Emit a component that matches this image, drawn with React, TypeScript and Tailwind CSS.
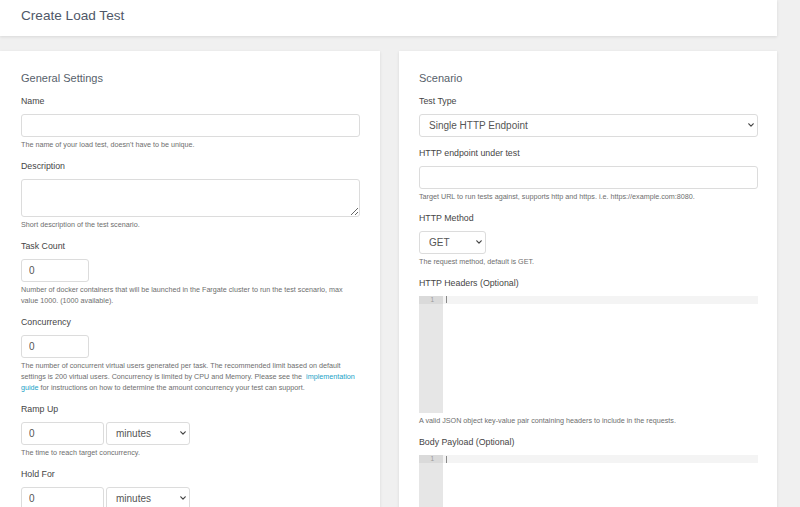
import React from "react";

function Chevron() {
  return (
    <svg
      width="6"
      height="4"
      viewBox="0 0 6 4"
      className="pointer-events-none absolute right-[4px] top-1/2 -translate-y-1/2"
    >
      <path
        d="M0.8 0.8 L3 3.1 L5.2 0.8"
        fill="none"
        stroke="#444"
        strokeWidth="1.2"
        strokeLinecap="round"
        strokeLinejoin="round"
      />
    </svg>
  );
}

function Label({ children }: { children: React.ReactNode }) {
  return <div className="text-[8.8px] leading-[12.5px] text-[#454545] mb-[6px]">{children}</div>;
}

function Help({ children }: { children: React.ReactNode }) {
  return <div className="text-[7.2px] leading-[11px] text-[#6e6e6e] mt-[2.5px] whitespace-nowrap">{children}</div>;
}

function TextInput({ value, w }: { value?: string; w: string }) {
  return (
    <input
      readOnly
      value={value ?? ""}
      className={`block ${w} h-[23px] border border-[#dcdcdc] rounded-[3px] bg-white text-[10px] text-[#555] pl-[7px] outline-none font-['Liberation_Sans',Arial,sans-serif]`}
    />
  );
}

function Select({ value, w }: { value: string; w: string }) {
  return (
    <div className={`relative ${w} h-[23px]`}>
      <select
        defaultValue={value}
        className="block w-full h-full appearance-none border border-[#dcdcdc] rounded-[3px] bg-white text-[10px] text-[#555] pl-[9px] outline-none font-['Liberation_Sans',Arial,sans-serif]"
      >
        <option>{value}</option>
      </select>
      <Chevron />
    </div>
  );
}

function Editor() {
  return (
    <div className="flex w-[339px] h-[117.4px] bg-white">
      <div className="w-[24px] h-full bg-[#e6e6e6]">
        <div className="h-[8.4px] bg-[#dadada] text-right pr-[9px] text-[6.5px] leading-[8.4px] text-[#9a9a9a]">1</div>
      </div>
      <div className="flex-1 h-full">
        <div className="h-[8.4px] bg-[#f4f4f4] flex items-center">
          <div className="w-px h-[7px] bg-[#888] ml-[3px]" />
        </div>
      </div>
    </div>
  );
}

export default function App() {
  return (
    <div className="w-[800px] h-[507px] overflow-hidden bg-[#f0f0f0] font-['Liberation_Sans',Arial,sans-serif]">
      <div className="w-[777px] h-[36px] bg-white shadow-[0_1px_3px_rgba(0,0,0,0.1)] pl-[21px] pt-[8px]">
        <div className="text-[13.6px] leading-[16px] text-[#4f5868]">Create Load Test</div>
      </div>

      <div className="mt-[15px] grid grid-cols-[380px_378px] gap-x-[19px]">
        {/* Left card */}
        <div className="h-[480px] bg-white shadow-[0_1px_3px_rgba(0,0,0,0.1)] pl-[21px] pr-[20px] pt-[20px]">
          <div className="text-[11px] leading-[14px] text-[#575f6b] mb-[10px]">General Settings</div>

          <div className="mb-[10px]">
            <Label>Name</Label>
            <TextInput w="w-[339px]" />
            <Help>The name of your load test, doesn't have to be unique.</Help>
          </div>

          <div className="mb-[10px]">
            <Label>Description</Label>
            <textarea
              readOnly
              className="block w-[339px] h-[38px] border border-[#dcdcdc] rounded-[3px] bg-white outline-none"
            />
            <Help>Short description of the test scenario.</Help>
          </div>

          <div className="mb-[10px]">
            <Label>Task Count</Label>
            <TextInput w="w-[68px]" value="0" />
            <Help>
              <div>Number of docker containers that will be launched in the Fargate cluster to run the test scenario, max</div>
              <div>value 1000. (1000 available).</div>
            </Help>
          </div>

          <div className="mb-[10px]">
            <Label>Concurrency</Label>
            <TextInput w="w-[68px]" value="0" />
            <Help>
              <div>The number of concurrent virtual users generated per task. The recommended limit based on default</div>
              <div>
                settings is 200 virtual users. Concurrency is limited by CPU and Memory. Please see the&nbsp;{" "}
                <span className="text-[#1b9fc7]">implementation</span>
              </div>
              <div>
                <span className="text-[#1b9fc7]">guide</span> for instructions on how to determine the amount concurrency your test can support.
              </div>
            </Help>
          </div>

          <div className="mb-[10px]">
            <Label>Ramp Up</Label>
            <div className="flex gap-[2px]">
              <TextInput w="w-[83px]" value="0" />
              <Select w="w-[84px]" value="minutes" />
            </div>
            <Help>The time to reach target concurrency.</Help>
          </div>

          <div className="mb-[10px]">
            <Label>Hold For</Label>
            <div className="flex gap-[2px]">
              <TextInput w="w-[83px]" value="0" />
              <Select w="w-[84px]" value="minutes" />
            </div>
          </div>
        </div>

        {/* Right card */}
        <div className="h-[480px] bg-white shadow-[0_1px_3px_rgba(0,0,0,0.1)] pl-[20px] pr-[19px] pt-[20px]">
          <div className="text-[11px] leading-[14px] text-[#575f6b] mb-[10px]">Scenario</div>

          <div className="mb-[10.5px]">
            <Label>Test Type</Label>
            <Select w="w-[339px]" value="Single HTTP Endpoint" />
          </div>

          <div className="mb-[10px]">
            <Label>HTTP endpoint under test</Label>
            <TextInput w="w-[339px]" />
            <Help>Target URL to run tests against, supports http and https. i.e. https://example.com:8080.</Help>
          </div>

          <div className="mb-[10px]">
            <Label>HTTP Method</Label>
            <Select w="w-[67px]" value="GET" />
            <Help>The request method, default is GET.</Help>
          </div>

          <div className="mb-[10px]">
            <Label>HTTP Headers (Optional)</Label>
            <Editor />
            <Help>A valid JSON object key-value pair containing headers to include in the requests.</Help>
          </div>

          <div className="mb-[10px]">
            <Label>Body Payload (Optional)</Label>
            <Editor />
          </div>
        </div>
      </div>
    </div>
  );
}
